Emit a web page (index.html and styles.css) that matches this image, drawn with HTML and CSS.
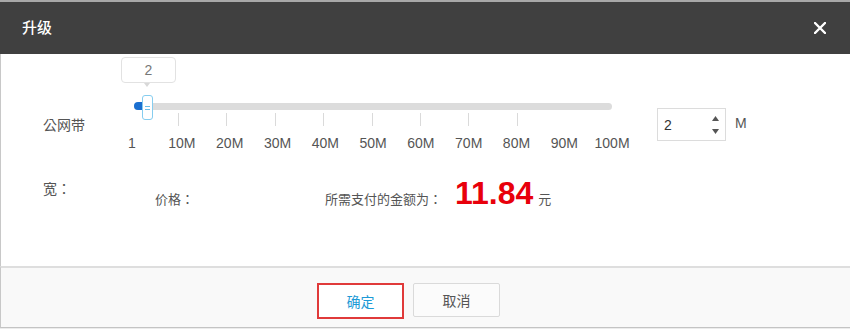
FILE: index.html
```html
<!DOCTYPE html>
<html lang="zh-CN">
<head>
<meta charset="utf-8">
<title>升级</title>
<link rel="stylesheet" href="styles.css">
</head>
<body>
<div class="dialog">
  <div class="header">
    <span class="title">升级</span>
    <svg class="close" width="12" height="12" viewBox="0 0 12 12"><path d="M1 1L11 11M11 1L1 11" stroke="#fff" stroke-width="2.4" stroke-linecap="round"/></svg>
  </div>
  <div class="body">
    <div class="label" lang="zh-TW">公网带宽：</div>
    <div class="content">
      <div class="slider-row">
        <div class="slider">
          <div class="tip">2</div>
          <div class="track">
            <div class="fill"></div>
            <div class="thumb"><i></i><i></i></div>
          </div>
          <div class="ticks">
            <i></i><i></i><i></i><i></i><i></i><i></i><i></i><i></i>
          </div>
          <div class="scale">
            <span>1</span><span>10M</span><span>20M</span><span>30M</span><span>40M</span><span>50M</span><span>60M</span><span>70M</span><span>80M</span><span>90M</span><span>100M</span>
          </div>
        </div>
        <div class="num">
          <span class="val">2</span>
          <span class="spin">
            <svg width="7" height="5" viewBox="0 0 7 5"><path d="M3.5 0L7 5H0Z" fill="#555"/></svg>
            <svg width="7" height="5" viewBox="0 0 7 5"><path d="M0 0H7L3.5 5Z" fill="#555"/></svg>
          </span>
        </div>
        <span class="unit">M</span>
      </div>
      <div class="price-row">
        <span class="price-label">价格<span class="cc" lang="zh-TW">：</span></span>
        <span class="pay-label">所需支付的金额为<span class="cc" lang="zh-TW">：</span></span>
        <span class="amount">11.84</span>
        <span class="yuan">元</span>
      </div>
    </div>
  </div>
  <div class="footer">
    <button class="btn btn-ok">确定</button>
    <button class="btn btn-cancel">取消</button>
  </div>
</div>
</body>
</html>
```

FILE: styles.css
```css
html {
  background: #ececec;
}
body {
  margin: 0;
  width: 850px;
  height: 329px;
  overflow: hidden;
  font-family: "Liberation Sans", "Noto Sans CJK SC", sans-serif;
  color: #555;
}
.cc {
  font-family: "Noto Sans CJK TC", "Noto Sans CJK SC", sans-serif;
}
.dialog {
  width: 850px;
  background: #fff;
  border-top: 2px solid #a8a8a8;
}
.header {
  height: 52px;
  background: #404040;
  display: flex;
  align-items: center;
  justify-content: space-between;
  padding: 0 24px 0 22px;
}
.title {
  color: #fff;
  font-size: 15px;
  line-height: 20px;
  font-weight: 500;
}
.close {
  display: block;
}
.body {
  height: 212px;
  border-left: 1px solid #c8c8c8;
  display: flex;
  align-items: flex-start;
  padding-top: 3px;
  box-sizing: border-box;
}
.label {
  margin-left: 42px;
  margin-top: 35px;
  width: 45px;
  font-family: "Noto Sans CJK TC", "Noto Sans CJK SC", sans-serif;
  font-size: 14px;
  line-height: 64px;
  color: #555;
}
.content {
  margin-left: 33px;
}
.slider-row {
  display: flex;
  align-items: flex-start;
}
.slider {
  position: relative;
  width: 515px;
  height: 93px;
}
.tip {
  position: absolute;
  left: 0;
  top: 0;
  width: 55px;
  height: 26px;
  box-sizing: border-box;
  border: 1px solid #e2e2e2;
  border-radius: 4px;
  background: #fff;
  text-align: center;
  font-size: 14px;
  line-height: 24px;
  color: #777;
}
.tip::after {
  content: "";
  position: absolute;
  left: 22px;
  top: 25px;
  border-left: 3px solid transparent;
  border-right: 3px solid transparent;
  border-top: 4px solid #d8d8d8;
}
.track {
  position: relative;
  margin-top: 46px;
  margin-left: 13px;
  width: 478px;
  height: 7px;
  border-radius: 4px;
  background: #dcdcdc;
}
.fill {
  position: absolute;
  left: 0;
  top: -1px;
  width: 12px;
  height: 8px;
  border-radius: 4px 0 0 4px;
  background: #1a6fd0;
}
.thumb {
  position: absolute;
  left: 8px;
  top: -8px;
  width: 11px;
  height: 25px;
  box-sizing: border-box;
  border: 1px solid #86cdef;
  border-radius: 3px;
  background: #fff;
  display: flex;
  flex-direction: column;
  align-items: center;
  justify-content: center;
  gap: 2px;
}
.thumb i {
  display: block;
  width: 5px;
  height: 1px;
  background: #6cbfe8;
}
.ticks {
  display: flex;
  gap: 47.4px;
  margin-top: 3px;
  margin-left: 57px;
}
.ticks i {
  display: block;
  width: 1px;
  height: 13px;
  background: #dadada;
}
.scale {
  display: flex;
  margin-top: 9px;
  font-size: 14px;
  line-height: 16px;
  color: #555;
}
.scale span {
  width: 47.8px;
  flex: none;
  text-align: center;
}
.scale span:first-child {
  width: 22px;
  margin-right: 15px;
}
.num {
  margin-left: 21px;
  margin-top: 51px;
  width: 69px;
  height: 33px;
  box-sizing: border-box;
  border: 1px solid #dcdcdc;
  display: flex;
  align-items: center;
  justify-content: space-between;
  padding: 0 6px 0 6px;
}
.val {
  font-size: 14px;
  color: #333;
}
.spin {
  display: flex;
  flex-direction: column;
  gap: 8px;
  margin-top: 1px;
}
.spin svg {
  display: block;
}
.unit {
  margin-left: 9px;
  margin-top: 58px;
  font-size: 14px;
  line-height: 16px;
  color: #555;
}
.price-row {
  display: flex;
  align-items: baseline;
  margin-left: 34px;
  margin-top: 27px;
  font-size: 13px;
  line-height: 20px;
  color: #555;
}
.price-label {
  width: 170px;
}
.amount {
  margin-left: 13px;
  font-size: 32px;
  line-height: 32px;
  font-weight: bold;
  color: #e8000b;
}
.yuan {
  margin-left: 5px;
}
.footer {
  height: 62px;
  border-top: 2px solid #dedede;
  border-left: 1px solid #c8c8c8;
  border-bottom: 1px solid #c4c4c4;
  background: #f9f9f9;
  display: flex;
  align-items: flex-start;
  gap: 9px;
  padding: 15px 0 0 316px;
  box-sizing: border-box;
}
.btn {
  font-family: "Liberation Sans", "Noto Sans CJK SC", sans-serif;
  font-size: 14px;
  width: 87px;
  box-sizing: border-box;
  border-radius: 2px;
  padding: 0;
  cursor: pointer;
}
.btn-ok {
  height: 36px;
  border: 2px solid #e03a3a;
  border-radius: 0;
  background: #fff;
  color: #1d9ad6;
}
.btn-cancel {
  height: 34px;
  border: 1px solid #dadada;
  background: #fbfbfb;
  color: #555;
}
```
